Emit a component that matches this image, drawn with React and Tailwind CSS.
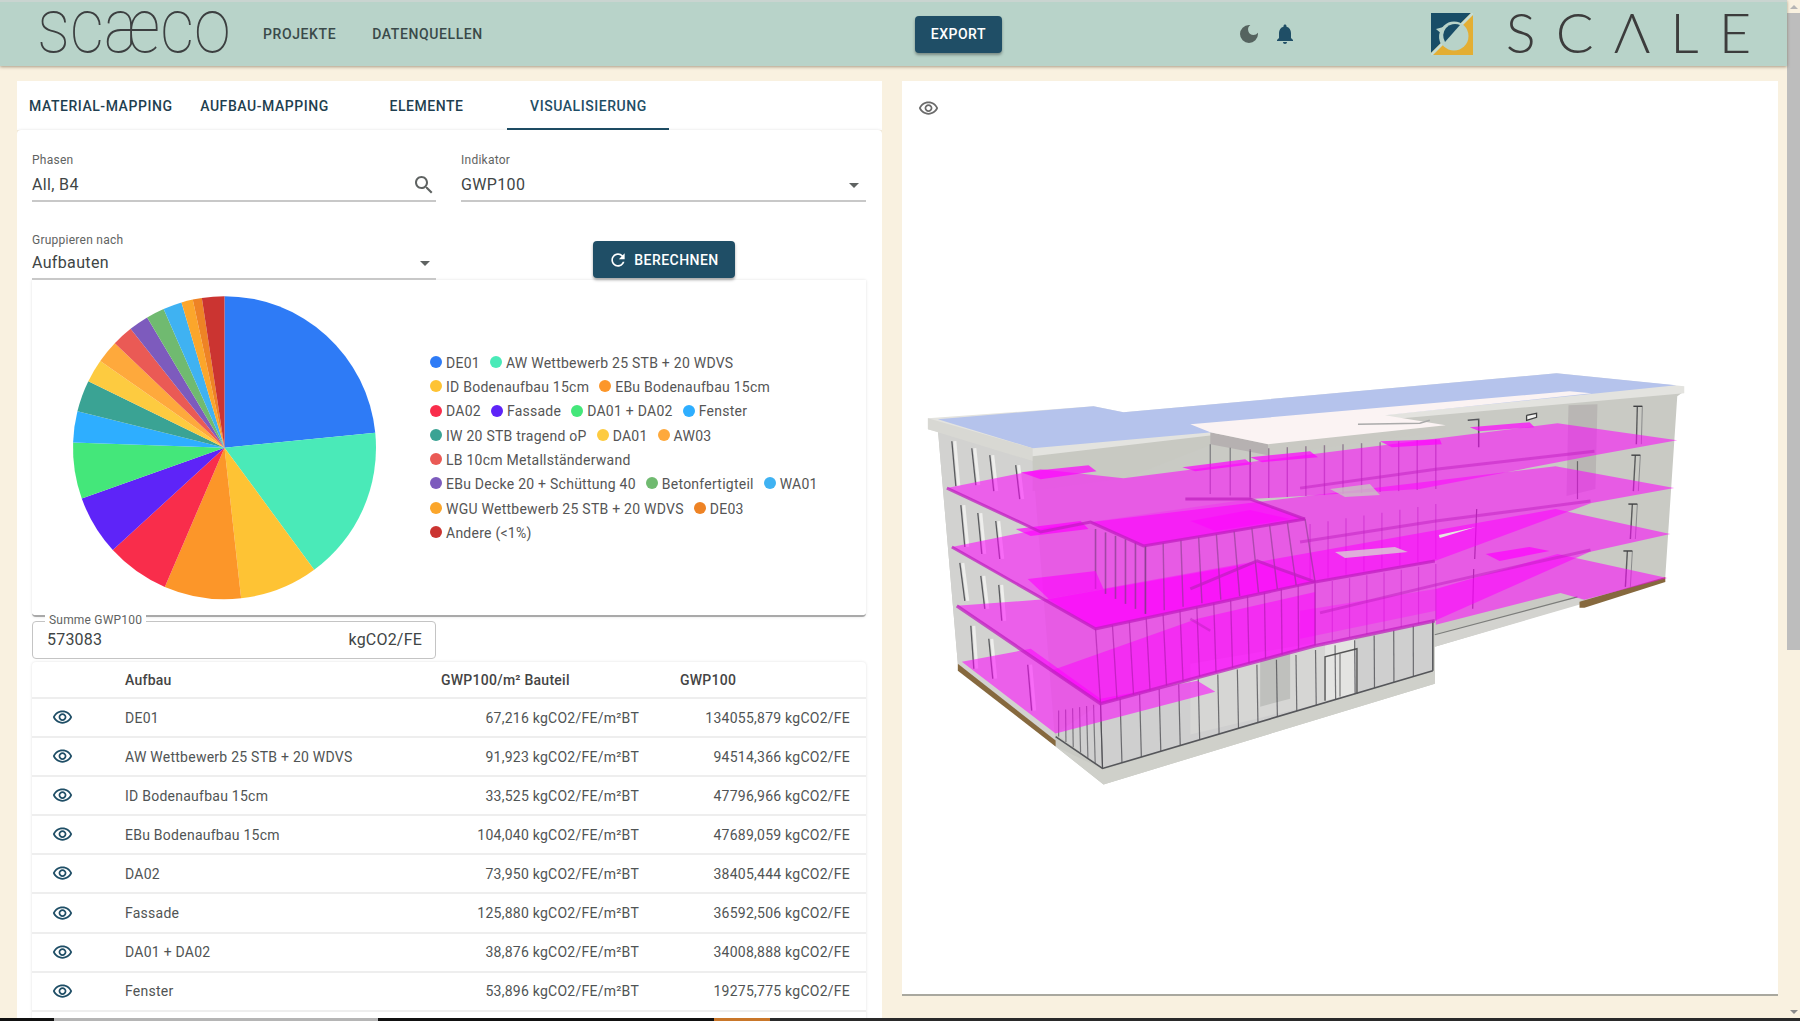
import React from "react";

const EYE = "M12 6c3.79 0 7.17 2.13 8.82 5.5C19.17 14.87 15.79 17 12 17s-7.17-2.13-8.82-5.5C4.83 8.13 8.21 6 12 6m0-2C7 4 2.73 7.11 1 11.5 2.73 15.89 7 19 12 19s9.27-3.11 11-7.5C21.27 7.11 17 4 12 4zm0 5c1.38 0 2.5 1.12 2.5 2.5S13.38 14 12 14s-2.5-1.12-2.5-2.5S10.62 9 12 9m0-2c-2.48 0-4.5 2.02-4.5 4.5S9.52 16 12 16s4.5-2.02 4.5-4.5S14.48 7 12 7z";

const Icon = ({ d, className }) => (
  <svg viewBox="0 0 24 24" className={className} fill="currentColor"><path d={d} /></svg>
);

const slices = [
  [84.35, "#2e7bf6"], [143.7, "#4aeab8"], [173.7, "#fec334"], [203.2, "#fc9629"], [227.5, "#f92d4b"],
  [250.4, "#5e24f8"], [272, "#44e77a"], [283.9, "#2eaeff"], [296, "#3aa394"], [304.9, "#fdcb40"],
  [313.6, "#fea93c"], [321.7, "#ea5a55"], [329.3, "#7d5bbd"], [336.3, "#70ba70"], [343.5, "#3fb2f2"],
  [347.9, "#fba62b"], [351.4, "#ee8325"], [360, "#cb3431"],
];

const legend = [
  [["DE01", "#2e7bf6"], ["AW Wettbewerb 25 STB + 20 WDVS", "#4aeab8"]],
  [["ID Bodenaufbau 15cm", "#fec334"], ["EBu Bodenaufbau 15cm", "#fc9629"]],
  [["DA02", "#f92d4b"], ["Fassade", "#5e24f8"], ["DA01 + DA02", "#44e77a"], ["Fenster", "#2eaeff"]],
  [["IW 20 STB tragend oP", "#3aa394"], ["DA01", "#fdcb40"], ["AW03", "#fea93c"]],
  [["LB 10cm Metallständerwand", "#ea5a55"]],
  [["EBu Decke 20 + Schüttung 40", "#7d5bbd"], ["Betonfertigteil", "#70ba70"], ["WA01", "#3fb2f2"]],
  [["WGU Wettbewerb 25 STB + 20 WDVS", "#fba62b"], ["DE03", "#ee8325"]],
  [["Andere (<1%)", "#cb3431"]],
];

const rows = [
  ["DE01", "67,216 kgCO2/FE/m²BT", "134055,879 kgCO2/FE"],
  ["AW Wettbewerb 25 STB + 20 WDVS", "91,923 kgCO2/FE/m²BT", "94514,366 kgCO2/FE"],
  ["ID Bodenaufbau 15cm", "33,525 kgCO2/FE/m²BT", "47796,966 kgCO2/FE"],
  ["EBu Bodenaufbau 15cm", "104,040 kgCO2/FE/m²BT", "47689,059 kgCO2/FE"],
  ["DA02", "73,950 kgCO2/FE/m²BT", "38405,444 kgCO2/FE"],
  ["Fassade", "125,880 kgCO2/FE/m²BT", "36592,506 kgCO2/FE"],
  ["DA01 + DA02", "38,876 kgCO2/FE/m²BT", "34008,888 kgCO2/FE"],
  ["Fenster", "53,896 kgCO2/FE/m²BT", "19275,775 kgCO2/FE"],
];

function Pie() {
  const cx = 192.5, cy = 167.7, r = 151.5;
  const pt = (a) => {
    const t = (a * Math.PI) / 180;
    return [cx + r * Math.sin(t), cy - r * Math.cos(t)];
  };
  let prev = 0;
  return (
    <svg viewBox="0 0 398 335" className="w-[398px] h-[335px] shrink-0">
      {slices.map(([end, c]) => {
        const [x1, y1] = pt(prev);
        const [x2, y2] = pt(end);
        const large = end - prev > 180 ? 1 : 0;
        prev = end;
        return <path key={c + end} d={`M${cx} ${cy}L${x1} ${y1}A${r} ${r} 0 ${large} 1 ${x2} ${y2}Z`} fill={c} />;
      })}
    </svg>
  );
}

function Mull({ top, bot, n, stroke = "#3f3f44", w = 1.4, o = 0.75 }) {
  const out = [];
  for (let i = 0; i <= n; i++) {
    const t = i / n;
    out.push(
      <line key={i}
        x1={top[0] + (top[2] - top[0]) * t} y1={top[1] + (top[3] - top[1]) * t}
        x2={bot[0] + (bot[2] - bot[0]) * t} y2={bot[1] + (bot[3] - bot[1]) * t}
        stroke={stroke} strokeWidth={w} strokeOpacity={o} />
    );
  }
  return <g>{out}</g>;
}

const P = ({ p, f = "#ff00ff", o = 0.55 }) => <polygon points={p} fill={f} fillOpacity={o} />;
const L = ({ p, c = "#c020c0", w = 3, o = 0.75 }) => <polyline points={p} fill="none" stroke={c} strokeWidth={w} strokeOpacity={o} />;

function Building() {
  return (
    <svg viewBox="902 81 876 915" className="absolute inset-0 w-full h-full">
      {/* shell */}
      <polygon points="937,430 1032,449 1685,392 1678,397 1666,578 1580,605 1435,648 1435,685 1103,786 1055,748 957,665" fill="#c9cac4" />
      <polygon points="937,430 1032,462 1055,748 957,665" fill="#d2d2d0" />
      <polygon points="1032,449 1212,433 1212,445 1125,479 1032,492" fill="#c8c9c2" />
      <polygon points="1055,748 1103,771 1435,672 1435,685 1103,786" fill="#cfd0ca" />
      <polygon points="1435,636 1580,598 1583,605 1435,648" fill="#d3d3cf" />
      <polyline points="1435,636 1578,598" fill="none" stroke="#7c7d7b" strokeWidth="1.2" />

      {/* left wall windows */}
      {[[951,442,955,487],[971,449,975,486],[989,456,993,492],[1015,466,1019,500],[960,506,964,548],[977,514,981,555],[995,522,999,560],[959,564,964,602],[980,577,984,610],[998,586,1001,622],[970,627,973,670],[988,640,992,680],[1027,666,1031,712]].map((w, i) => (
        <g key={i}>
          <line x1={w[0] + 3} y1={w[1]} x2={w[2] + 3} y2={w[3]} stroke="#eeeeec" strokeWidth="3" />
          <line x1={w[0]} y1={w[1]} x2={w[2]} y2={w[3]} stroke="#5a5b5e" strokeWidth="1.3" />
        </g>
      ))}

      {/* right wall windows */}
      <polygon points="1569,406 1598,405 1596,490 1567,497" fill="#b9b6b4" />
      {[[1638,407,1637,445],[1636,456,1634,492],[1633,505,1631,540],[1628,552,1626,588]].map((w, i) => (
        <g key={i}>
          <line x1={w[0]} y1={w[1]} x2={w[2]} y2={w[3]} stroke="#5a5b5c" strokeWidth="1.4" />
          <line x1={w[0] + 5} y1={w[1]} x2={w[2] + 5} y2={w[3]} stroke="#8a8b8c" strokeWidth="1" />
          <line x1={w[0] - 4} y1={w[1]} x2={w[0] + 5} y2={w[1]} stroke="#3f4042" strokeWidth="1.4" />
        </g>
      ))}
      <polyline points="1527,416 1537,414 1537,418 1527,421 1527,416" fill="#f2f2f0" stroke="#3e3f40" strokeWidth="1.3" />
      <polyline points="1468,421 1479,420 1479,448" fill="none" stroke="#55565a" strokeWidth="1.5" />
      <line x1="1477" y1="510" x2="1475" y2="560" stroke="#555" strokeWidth="1.2" />
      <line x1="1474" y1="570" x2="1473" y2="610" stroke="#555" strokeWidth="1.2" />
      <polyline points="1578,462 1578,500" fill="none" stroke="#666" strokeWidth="1.2" />

      {/* roof */}
      <polygon points="927,419 1093,407 1123,413 1557,374 1685,387 1685,394 1212,436 1032,457 927,430" fill="#e3e3df" />
      <polygon points="937,420 1093,407 1123,413 1557,374 1677,386 1212,433 1032,449" fill="#b5c3ec" />
      <polygon points="927,419 1032,449 1032,462 937,433 927,430" fill="#d8d8d3" />
      <polygon points="1210,433 1268,445 1268,456 1210,445" fill="#b6b1b1" />
      <polygon points="1268,445 1446,426 1446,432 1268,456" fill="#c9c9c3" />
      <polygon points="1190,425 1570,392 1592,394 1385,416 1446,426 1268,445 1210,433" fill="#fbf3f3" />
      <polyline points="1358,425 1420,424 1430,421" fill="none" stroke="#aaa" strokeWidth="1.4" />

      {/* ground floor glass */}
      <polygon points="1100,705 1433,622 1433,672 1102,770 1055,735" fill="#cfcfcf" />
      <polygon points="1190,665 1340,640 1340,700 1190,736" fill="#d6d6d4" />
      <polygon points="1260,660 1290,652 1290,700 1260,708" fill="#bfc0bd" />
      <polygon points="1325,645 1355,640 1355,695 1325,702" fill="#e4e4e2" />
      <polyline points="1325,702 1325,658 1357,650 1357,695" fill="none" stroke="#555" strokeWidth="1.4" />
      <line x1="1340" y1="655" x2="1340" y2="698" stroke="#666" strokeWidth="1" />
      <Mull top={[1100, 705, 1433, 622]} bot={[1102, 770, 1433, 672]} n={17} w={1.2} o={0.7} />
      <Mull top={[1058, 712, 1100, 705]} bot={[1058, 738, 1102, 770]} n={6} w={1.2} o={0.6} />
      <polyline points="1055,738 1102,770 1433,672" fill="none" stroke="#55565a" strokeWidth="1.6" />
      <line x1="1433" y1="622" x2="1433" y2="672" stroke="#55565a" strokeWidth="1.2" />

      {/* wood edge */}
      <polygon points="957,665 1055,742 1055,748 957,672" fill="#86693e" />
      <polygon points="1580,603 1666,578 1666,583 1585,609 1580,609" fill="#86693e" />

      {/* lowest slabs */}
      <P p="961,663 1055,735 1215,693 1197,682 1100,700 1030,650" />
      <P p="1668,579 1585,601 1561,594 1436,626 1436,590 1558,555" />

      {/* upper facade behind tiers */}
      <Mull top={[1250, 450, 1436, 440]} bot={[1250, 500, 1436, 490]} n={10} stroke="#6a4a70" w={1.4} o={0.6} />
      <Mull top={[1310, 525, 1436, 505]} bot={[1310, 582, 1436, 560]} n={7} stroke="#7a3f80" w={1.2} o={0.5} />
      <Mull top={[1315, 585, 1436, 565]} bot={[1315, 645, 1436, 622]} n={7} stroke="#7a3f80" w={1.2} o={0.5} />
      <Mull top={[1210, 445, 1250, 452]} bot={[1210, 495, 1250, 498]} n={2} stroke="#5a5a60" w={1.4} o={0.6} />

      {/* tiers */}
      <P p="956,607 1100,705 1315,647 1435,622 1590,553 1671,535 1556,510 1050,600" />
      <P p="951,548 1095,630 1315,583 1435,562 1592,504 1675,489 1556,467 1050,528" />
      <P p="946,489 1040,533 1090,523 1143,547 1305,520 1250,500 1420,490 1595,456 1678,441 1558,424 1123,479 1040,470" />

      {/* deep magenta cantilever plates */}
      <P p="1050,672 1100,705 1315,647 1315,593 1197,620" o={0.5} />
      <P p="1047,600 1095,630 1315,583 1257,562" o={0.45} />
      <P p="1090,523 1143,547 1305,520 1250,500" o={0.2} />
      <P p="1300,640 1436,612 1436,590 1300,612" o={0.3} />

      {/* facade seen through slabs */}
      <Mull top={[1095, 630, 1315, 583]} bot={[1100, 705, 1315, 647]} n={13} stroke="#a018a0" w={1.3} o={0.55} />
      <Mull top={[1145, 547, 1305, 520]} bot={[1145, 615, 1315, 583]} n={9} stroke="#7d3c82" w={1.4} o={0.55} />
      <Mull top={[1095, 530, 1145, 547]} bot={[1095, 590, 1145, 615]} n={5} stroke="#7d3c82" w={1.6} o={0.65} />

      {/* extra plates */}
      <P p="1020,473 1088,466 1096,472 1040,480" o={0.7} />
      <P p="1182,468 1245,460 1252,465 1195,472" o={0.7} />
      <P p="1250,458 1310,452 1318,458 1262,463" o={0.7} />
      <P p="1015,530 1080,522 1088,530 1030,537" o={0.7} />
      <P p="1027,580 1095,572 1103,590 1048,600" o={0.6} />
      <P p="1190,522 1250,511 1290,520 1215,532" o={0.45} />
      <P p="1470,428 1530,423 1535,428 1480,432" o={0.7} />
      <P p="1380,442 1440,440 1442,445 1392,448" o={0.7} />
      <P p="1486,555 1530,548 1550,552 1500,562" o={0.7} />

      {/* slab edges */}
      <L p="946,489 1040,533 1090,523 1143,547 1305,520" w={3} />
      <L p="1185,500 1250,500 1305,520" w={3} />
      <L p="1300,489 1436,470 1595,452" w={3} o={0.5} />
      <L p="951,548 1095,630 1315,583 1435,562" w={3} />
      <L p="1190,590 1257,562 1315,583" w={3} />
      <L p="1300,543 1436,522 1591,502" w={3} o={0.5} />
      <L p="956,607 1100,705 1315,647 1435,622" w={3.5} />
      <L p="1320,614 1436,586 1591,551" w={3} o={0.5} />
      <L p="1190,620 1210,632" w={2.5} o={0.5} />

      {/* openings */}
      <polygon points="1330,490 1370,485 1380,496 1345,498" fill="#c8c9c2" fillOpacity="0.75" />
      <polygon points="1335,553 1395,548 1408,553 1345,559" fill="#d8d9d2" fillOpacity="0.75" />
      <polygon points="1439,536 1476,528 1440,539" fill="#e6e6e0" />
    </svg>
  );
}

function Field({ label, children, icon, className = "", rowClass = "h-[35px] pt-[3px]" }) {
  return (
    <div className={className}>
      <div className="text-xs leading-[14px] text-[#5f6362] tracking-[0.25px]">{label}</div>
      <div className={`${rowClass} flex items-center justify-between border-b-2 border-[#c8c8c8] text-base text-[#404545] tracking-[0.35px]`}>
        <span>{children}</span>
        {icon}
      </div>
    </div>
  );
}

const Caret = ({ className = "" }) => <span className={`w-0 h-0 border-x-[5px] border-x-transparent border-t-[5px] border-t-[#5f6362] ${className}`} />;

export default function App() {
  return (
    <div className="h-[1021px] w-full overflow-hidden flex flex-col bg-[#f9f1e0] font-['Roboto',sans-serif]">
      <div className="flex flex-1 min-h-0">
        <div className="flex-1 min-w-0 flex flex-col">
          <header className="h-[66px] shrink-0 flex items-center bg-[#b8d3c9] border-t-2 border-[#c9d4d0] shadow-[0_1px_3px_rgba(90,70,40,0.5)] relative">
            <div className="w-[262px] pl-[37px] flex items-center">
              <span className="inline-block origin-left scale-x-[0.875] text-[#3c3f40] font-thin text-[76px] leading-[40px] h-[40px] -mt-[17px] font-['Roboto',sans-serif]">scæco</span>
            </div>
            <nav className="flex gap-[36px] text-sm font-medium text-[#3a4a4a] tracking-[0.6px] ml-[1px]">
              <span>PROJEKTE</span>
              <span>DATENQUELLEN</span>
            </nav>
            <button className="ml-[432px] w-[87px] h-[37px] rounded bg-[#1f4e66] text-white text-sm font-medium tracking-[0.5px] shadow-[0_2px_3px_rgba(0,0,0,0.35)]">EXPORT</button>
            <Icon className="ml-[235px] w-[24px] h-[24px] text-[#55635f]" d="M12 3a9 9 0 1 0 9 9c0-.46-.04-.92-.1-1.36a5.389 5.389 0 0 1-4.4 2.26 5.403 5.403 0 0 1-3.14-9.8c-.44-.06-.9-.1-1.36-.1z" />
            <Icon className="ml-[12px] w-[24px] h-[24px] text-[#1f4e66]" d="M12 22c1.1 0 2-.9 2-2h-4c0 1.1.89 2 2 2zm6-6v-5c0-3.07-1.64-5.64-4.5-6.32V4c0-.83-.67-1.5-1.5-1.5s-1.5.67-1.5 1.5v.68C7.63 5.36 6 7.92 6 11v5l-2 2v1h16v-1l-2-2z" />
            <svg viewBox="0 0 42 42" className="ml-[134px] w-[42px] h-[42px] shrink-0">
              <rect width="42" height="42" fill="#e3ae33" />
              <polygon points="0,0 40,0 0,40" fill="#184d67" />
              <polygon points="42,0 42,2 2,42 0,42 0,40 40,0" fill="#c5dcd3" />
              <circle cx="23" cy="23" r="14.5" fill="#b8d3c9" />
              <path d="M11 30 C8 23 10 16 17 13" fill="none" stroke="#b8d3c9" strokeWidth="3" />
              <polygon points="5,16 16,13 13,23" fill="#b8d3c9" />
              <path d="M15 15 A12 12 0 0 1 29 12 L14 29 A12 12 0 0 1 15 15Z" fill="#184d67" />
            </svg>
            <span className="ml-[33px] shrink-0 text-[#3c3c3c] text-[56px] leading-[44px] font-light tracking-[20px] -mt-[4px] font-['Lato',sans-serif] whitespace-nowrap">SCΛLE</span>
          </header>
          <div className="flex-1 min-h-0 flex gap-[20px] pl-[17px] pt-[15px]">
            <section className="w-[865px] h-[937px] flex flex-col overflow-hidden">
              <div className="h-[49px] shrink-0 flex bg-white text-sm font-medium text-[#1f3f50] tracking-[0.55px]">
                <div className="w-[166px] pl-[12px] pt-[1px] flex items-center justify-start">MATERIAL-MAPPING</div>
                <div className="w-[162px] pl-[1px] pt-[1px] flex items-center justify-center">AUFBAU-MAPPING</div>
                <div className="w-[162px] pl-[1px] pt-[1px] flex items-center justify-center">ELEMENTE</div>
                <div className="w-[162px] pl-[1px] pt-[3px] flex items-center justify-center border-b-2 border-[#1f4e66] text-[#1f4e66]">VISUALISIERUNG</div>
              </div>
              <div className="flex-1 min-h-0 bg-white px-[15px] pt-[23px] rounded-t shadow-[0_0_3px_rgba(0,0,0,0.12)]">
                <div className="grid grid-cols-[404px_405px] gap-x-[25px]">
                  <Field label="Phasen" icon={<Icon className="w-[24px] h-[24px] text-[#5f6362]" d="M15.5 14h-.79l-.28-.27C15.41 12.59 16 11.11 16 9.5 16 5.91 13.09 3 9.5 3S3 5.91 3 9.5 5.91 16 9.5 16c1.61 0 3.09-.59 4.23-1.57l.27.28v.79l5 4.99L20.49 19l-4.99-5zm-6 0C7.01 14 5 11.99 5 9.5S7.01 5 9.5 5 14 7.01 14 9.5 11.99 14 9.5 14z" />}>All, B4</Field>
                  <Field label="Indikator" icon={<Caret className="mr-[7px]" />}>GWP100</Field>
                  <Field label="Gruppieren nach" icon={<Caret className="mr-[6px]" />} className="mt-[31px]" rowClass="h-[33px] pt-[1px]">Aufbauten</Field>
                  <div className="mt-[39px] flex justify-center h-[37px]">
                    <button className="w-[142px] h-[37px] rounded bg-[#1f4e66] text-white text-sm font-medium tracking-[0.45px] flex items-center justify-center gap-[6px] shadow-[0_2px_3px_rgba(0,0,0,0.35)]">
                      <Icon className="w-[20px] h-[20px]" d="M17.65 6.35C16.2 4.9 14.21 4 12 4c-4.42 0-7.99 3.58-7.99 8s3.57 8 7.99 8c3.73 0 6.84-2.55 7.73-6h-2.08c-.82 2.33-3.04 4-5.65 4-3.31 0-6-2.69-6-6s2.69-6 6-6c1.66 0 3.14.69 4.22 1.78L13 11h7V4l-2.35 2.35z" />
                      BERECHNEN
                    </button>
                  </div>
                </div>
                <div className="w-[834px] h-[337px] flex items-center bg-white rounded-b border-b-2 border-[#a9a9a9] shadow-[0_0_3px_rgba(0,0,0,0.12)]">
                  <Pie />
                  <div className="flex flex-col pt-[1px] text-sm text-[#555] leading-[24.3px] tracking-[0.25px]">
                    {legend.map((row, i) => (
                      <div key={i} className="flex gap-[10px]">
                        {row.map(([t, c]) => (
                          <div key={t} className="flex items-center gap-[4px] whitespace-nowrap">
                            <svg viewBox="0 0 12 12" className="w-[12px] h-[12px] -mt-[2px]"><circle cx="6" cy="6" r="6" fill={c} /></svg>
                            {t}
                          </div>
                        ))}
                      </div>
                    ))}
                  </div>
                </div>
                <div className="relative mt-[4px] w-[404px] h-[38px] border border-[#c4c4c4] rounded px-[14px] flex items-center justify-between text-base text-[#404545] tracking-[0.2px]">
                  <span>573083</span>
                  <span className="-mr-[1px]">kgCO2/FE</span>
                  <span className="absolute left-[12px] -top-[9px] bg-white px-[4px] text-xs leading-[14px] text-[#5f6362] tracking-[0.2px]">Summe GWP100</span>
                </div>
                <div className="mt-[3px] w-[834px] text-sm text-[#505454] tracking-[0.25px] shadow-[0_0_3px_rgba(0,0,0,0.12)] rounded-t">
                  <div className="h-[37px] grid grid-cols-[93px_316px_239px_186px] items-center font-medium border-b-2 border-[#eeeeee] text-[#444]">
                    <span />
                    <span>Aufbau</span>
                    <span>GWP100/m² Bauteil</span>
                    <span>GWP100</span>
                  </div>
                  {rows.map((r) => (
                    <div key={r[0]} className="h-[39.1px] grid grid-cols-[60px_33px_315px_199px_211px] items-center border-b-2 border-[#eeeeee]">
                      <div className="flex justify-center"><Icon className="w-[21px] h-[21px] text-[#1f4e66]" d={EYE} /></div>
                      <span />
                      <span>{r[0]}</span>
                      <span className="text-right">{r[1]}</span>
                      <span className="text-right">{r[2]}</span>
                    </div>
                  ))}
                  <div className="h-[39px]" />
                </div>
              </div>
            </section>
            <section className="relative w-[876px] h-[915px] bg-white border-b-2 border-[#a9a89f]">
              <Building />
              <Icon className="absolute left-[16px] top-[17px] w-[21px] h-[21px] text-[#6b6b6b]" d={EYE} />
            </section>
          </div>
        </div>
        <div className="w-[13px] shrink-0 flex flex-col items-center">
          <div className="h-[13px] flex items-center"><span className="w-0 h-0 border-x-[4px] border-x-transparent border-b-[4px] border-b-[#b5b5b5]" /></div>
          <div className="w-full h-[637px] bg-[#bdbdbd]" />
          <div className="mt-auto h-[13px] flex items-center"><span className="w-0 h-0 border-x-[4px] border-x-transparent border-t-[4px] border-t-[#8a8a8a]" /></div>
        </div>
      </div>
      <div className="h-[3px] shrink-0 flex bg-[#2a2a2a]">
        <div className="w-[54px] bg-[#111]" />
        <div className="w-[324px] bg-[#b5b5b5]" />
        <div className="w-[336px] bg-[#111]" />
        <div className="w-[56px] bg-[#c9772a]" />
      </div>
    </div>
  );
}
